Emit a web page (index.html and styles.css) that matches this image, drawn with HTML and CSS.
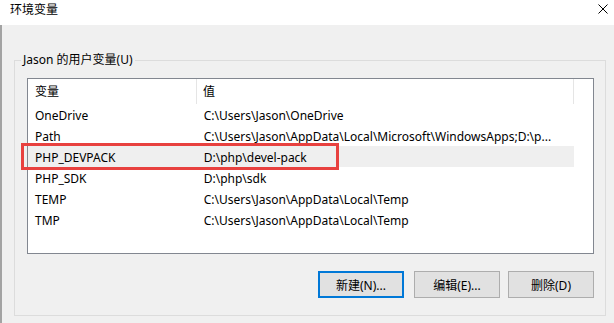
FILE: index.html
```html
<!DOCTYPE html>
<html lang="zh-CN">
<head>
    <meta charset="UTF-8">
    <title>环境变量</title>
    <link rel="stylesheet" href="styles.css">
</head>
<body>

    <!-- Title bar -->
    <div class="titlebar">
        <span class="title">环境变量</span>
        <svg class="close" width="10" height="10" viewBox="0 0 10 10">
            <path d="M0.5 0.5 L9.5 9.5 M9.5 0.5 L0.5 9.5" stroke="#000" stroke-width="1" fill="none"/>
        </svg>
    </div>

    <div class="dialog">
        <fieldset class="group">
            <legend>Jason 的用户变量(U)</legend>

            <div class="listview">
                <div class="list-header">
                    <div class="col col-name">变量</div>
                    <div class="col col-value">值</div>
                    <div class="col col-rest"></div>
                </div>

                <div class="row">
                    <div class="col col-name">OneDrive</div>
                    <div class="col col-value">C:\Users\Jason\OneDrive</div>
                </div>
                <div class="row">
                    <div class="col col-name">Path</div>
                    <div class="col col-value">C:\Users\Jason\AppData\Local\Microsoft\WindowsApps;D:\p...</div>
                </div>
                <div class="row selected">
                    <div class="col col-name">PHP_DEVPACK</div>
                    <div class="col col-value">D:\php\devel-pack</div>
                </div>
                <div class="row">
                    <div class="col col-name">PHP_SDK</div>
                    <div class="col col-value">D:\php\sdk</div>
                </div>
                <div class="row">
                    <div class="col col-name">TEMP</div>
                    <div class="col col-value">C:\Users\Jason\AppData\Local\Temp</div>
                </div>
                <div class="row">
                    <div class="col col-name">TMP</div>
                    <div class="col col-value">C:\Users\Jason\AppData\Local\Temp</div>
                </div>

                <!-- annotation box -->
                <div class="highlight-box"></div>
            </div>

            <div class="buttons">
                <button class="btn default">新建(N)...</button>
                <button class="btn">编辑(E)...</button>
                <button class="btn">删除(D)</button>
            </div>
        </fieldset>
    </div>

</body>
</html>
```

FILE: styles.css
```css
/* Global */
* {
    margin: 0;
    padding: 0;
    box-sizing: border-box;
}

body {
    background: #f0f0f0;
    color: #000;
    font-family: "Noto Sans", "Noto Sans CJK SC", sans-serif;
    font-size: 12px;
    width: 614px;
    height: 323px;
    overflow: hidden;
}

/* TITLE BAR */
.titlebar {
    height: 25px;
    background: #ffffff;
    display: flex;
    justify-content: space-between;
    align-items: flex-start;
    padding: 0 6px 0 10px;
}

.titlebar .title {
    line-height: 20px;
}

.titlebar .close {
    margin-top: 4px;
}

/* DIALOG BODY */
.dialog {
    height: 298px;
    border-left: 2px solid #a3a3a3;
    padding: 27px 0 0 12px;
}

.group {
    width: 592px;
    border: 1px solid #dcdcdc;
    padding: 0 0 17px 0;
}

.group legend {
    margin-left: 6px;
    padding: 0 2px;
    line-height: 16px;
}

/* LIST VIEW */
.listview {
    position: relative;
    margin: 10px 11px 0 12px;
    height: 176px;
    background: #ffffff;
    border: 1px solid #828790;
}

.list-header,
.row {
    display: flex;
    white-space: nowrap;
}

.list-header {
    height: 25px;
}

.list-header .col {
    height: 25px;
    padding-top: 2px;
    line-height: 21px;
    border-right: 1px solid #e5e5e5;
}

.list-header .col-rest {
    flex: 1;
    border-right: none;
}

.col-name {
    width: 169px;
    padding-left: 7px;
}

.col-value {
    width: 377px;
    padding-left: 6px;
    overflow: hidden;
}

.row {
    width: 546px;
    height: 21px;
    padding-top: 2px;
    line-height: 19px;
}

.row .col-name {
    width: 170px;
}

.row.selected {
    background: #efefef;
}

/* red annotation rectangle */
.highlight-box {
    position: absolute;
    left: -7px;
    top: 64px;
    width: 318px;
    height: 27px;
    border: 3px solid #e8413f;
}

/* BUTTONS */
.buttons {
    display: flex;
    justify-content: flex-end;
    gap: 8px;
    margin: 17px 11px 0 0;
}

.btn {
    width: 86px;
    height: 27px;
    background: #e1e1e1;
    border: 1px solid #adadad;
    font-family: "Noto Sans", "Noto Sans CJK SC", sans-serif;
    font-size: 12px;
    color: #000;
}

.btn.default {
    border: 2px solid #0078d7;
    margin-right: 2px;
}
```
